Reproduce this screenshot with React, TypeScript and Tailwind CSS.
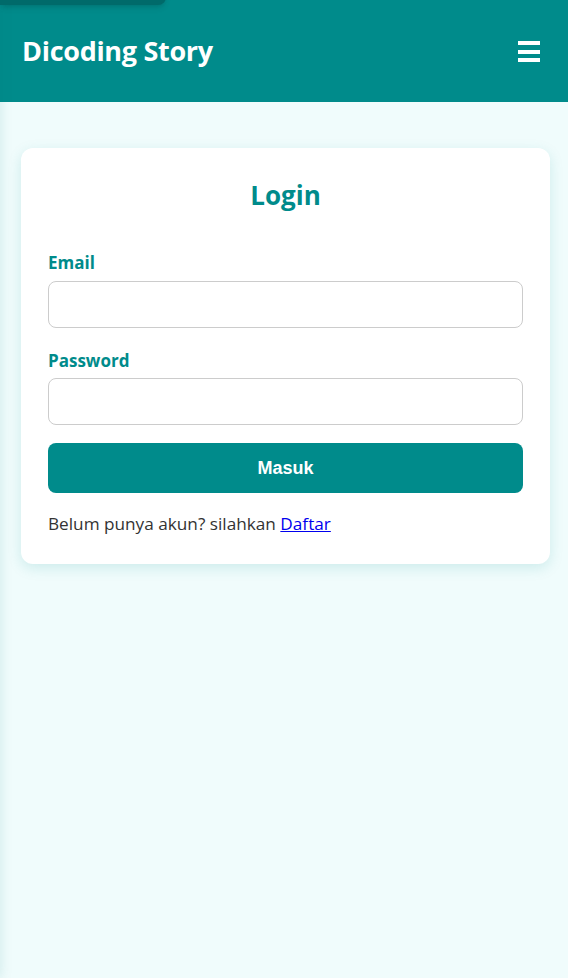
export default function App() {
  return (
    <div className="relative min-h-[978px] bg-[#f0fcfc] font-['Open_Sans',sans-serif] overflow-hidden">
      {/* skip link peeking from the top */}
      <a
        href="#main"
        className="absolute left-0 top-[-40px] z-20 h-[45px] w-[166px] rounded-br-lg bg-[#006a6a] shadow-md"
      />
      {/* off-canvas drawer shadow */}
      <div className="absolute left-[-200px] top-0 z-10 h-full w-[200px] shadow-[0_0_12px_rgba(0,120,120,0.15)]" />

      <header className="flex h-[102px] items-center justify-between bg-[#008b8b] pl-[22px] pr-[28px]">
        <h1 className="text-[27px] font-bold text-white tracking-[-0.3px]">Dicoding Story</h1>
        <button aria-label="Menu" className="flex w-[22px] flex-col gap-[4.5px] pt-[1px]">
          <span className="h-[4px] w-full bg-white" />
          <span className="h-[4px] w-full bg-white" />
          <span className="h-[4px] w-full bg-white" />
        </button>
      </header>

      <main id="main" className="px-[21px] pt-[46px]">
        <div className="w-[529px] rounded-xl bg-white px-[27px] pt-[28px] pb-[27px] shadow-[0_4px_14px_rgba(0,139,139,0.15)]">
          <h2 className="text-center text-[26px] font-bold text-[#008b8b]">Login</h2>
          <form className="mt-[35px] flex flex-col">
            <label className="text-[17px] font-bold text-[#008b8b]">Email</label>
            <input
              type="email"
              className="mt-[5px] h-[47px] w-full rounded-lg border border-[#cccccc] px-3"
            />
            <label className="mt-[20px] text-[17px] font-bold text-[#008b8b]">Password</label>
            <input
              type="password"
              className="mt-[5px] h-[47px] w-full rounded-lg border border-[#cccccc] px-3"
            />
            <button
              type="button"
              className="mt-[18px] h-[50px] w-full rounded-lg bg-[#008b8b] font-['Liberation_Sans',sans-serif] text-[18px] font-bold text-white"
            >
              Masuk
            </button>
          </form>
          <p className="mt-[18px] text-[17.2px] text-[#333333]">
            Belum punya akun? silahkan{' '}
            <a href="#" className="text-[#0000ee] underline">
              Daftar
            </a>
          </p>
        </div>
      </main>
    </div>
  )
}
